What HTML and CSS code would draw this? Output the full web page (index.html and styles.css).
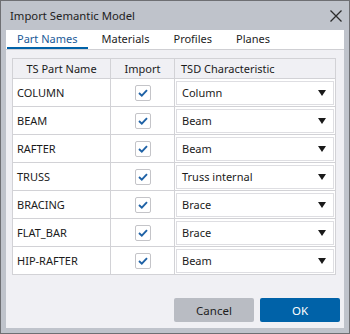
FILE: index.html
```html
<!DOCTYPE html>
<html lang="en">
<head>
  <meta charset="UTF-8" />
  <title>Import Semantic Model</title>
  <link rel="stylesheet" href="styles.css">
</head>
<body>
  <div class="window">
    <div class="titlebar">
      <span class="title">Import Semantic Model</span>
      <svg class="close" width="12" height="12" viewBox="0 0 12 12">
        <path d="M0.5 0.5 L11.5 11.5 M11.5 0.5 L0.5 11.5" stroke="#2b2b2b" stroke-width="1.3" fill="none"/>
      </svg>
    </div>

    <div class="content">
      <div class="tabs">
        <div class="tab active">Part Names</div>
        <div class="tab">Materials</div>
        <div class="tab">Profiles</div>
        <div class="tab">Planes</div>
      </div>

      <table class="grid">
        <thead>
          <tr>
            <th class="col-name">TS Part Name</th>
            <th class="col-import">Import</th>
            <th class="col-tsd">TSD Characteristic</th>
          </tr>
        </thead>
        <tbody id="rows"></tbody>
      </table>

      <div class="buttons">
        <button class="btn cancel">Cancel</button>
        <button class="btn ok">OK</button>
      </div>
    </div>
  </div>

  <script>
    const parts = [
      ["COLUMN", "Column"],
      ["BEAM", "Beam"],
      ["RAFTER", "Beam"],
      ["TRUSS", "Truss internal"],
      ["BRACING", "Brace"],
      ["FLAT_BAR", "Brace"],
      ["HIP-RAFTER", "Beam"]
    ];

    const check = '<svg width="10" height="8" viewBox="0 0 10 8"><path d="M1 4 L3.8 6.6 L9 1.2" stroke="#1f62a6" stroke-width="1.9" fill="none"/></svg>';
    const tbody = document.getElementById('rows');

    parts.forEach(([name, tsd]) => {
      const tr = document.createElement('tr');
      tr.innerHTML =
        `<td class="name">${name}</td>` +
        `<td class="import"><span class="checkbox">${check}</span></td>` +
        `<td class="tsd"><div class="combo"><span>${tsd}</span><span class="arrow"></span></div></td>`;
      tbody.appendChild(tr);
    });
  </script>
</body>
</html>
```

FILE: styles.css
```css
:root {
  --frame: #bfc3cb;
  --body: #f0f0f4;
  --line: #d2d2d6;
  --blue: #0062a8;
  --text: #1b1b1b;
}

body {
  margin: 0;
  font-family: 'Noto Sans', 'Open Sans', sans-serif;
  font-size: 11px;
  color: var(--text);
}

.window {
  width: 350px;
  height: 334px;
  box-sizing: border-box;
  background: var(--frame);
  border: 1px solid #6e6f73;
  display: flex;
  flex-direction: column;
}

.titlebar {
  height: 29px;
  display: flex;
  align-items: center;
  justify-content: space-between;
  padding: 0 7px 0 9px;
}

.title {
  font-size: 11.3px;
  color: #222;
}

.close {
  margin-top: 1px;
}

.content {
  flex: 1;
  margin: 0 5px 5px 5px;
  background: var(--body);
  display: flex;
  flex-direction: column;
}

.tabs {
  display: flex;
  gap: 4px;
  padding-left: 1px;
  background: #fff;
  border-bottom: 1px solid #cfcfd3;
  height: 19px;
}

.tab {
  padding: 0 10px;
  line-height: 17px;
  border-bottom: 2px solid transparent;
  color: #1e1e1e;
}

.tab.active {
  color: #1a5a98;
  border-bottom-color: var(--blue);
}

.grid {
  margin: 8px 0 0 6px;
  width: 324px;
  border-collapse: collapse;
  border: 1px solid #7f9dbd;
  table-layout: fixed;
}

.grid thead tr {
  height: 20px;
}

.grid tbody tr {
  height: 28px;
}

.grid th {
  font-weight: normal;
  background: var(--body);
  border: 1px solid var(--line);
  padding: 0;
  line-height: 14px;
}

.col-name { width: 97px; }
.col-import { width: 63px; }
.col-tsd {
  text-align: left;
  padding-left: 6px !important;
}

.grid td {
  padding: 0;
  background: #fff;
  border: 1px solid var(--line);
  line-height: 14px;
}

.grid td.name {
  padding-left: 4px;
}

.grid td.import {
  text-align: center;
}

.checkbox {
  display: inline-flex;
  align-items: center;
  justify-content: center;
  width: 14px;
  height: 14px;
  border: 1px solid #c4c4c8;
  border-radius: 2px;
  background: #fff;
  vertical-align: middle;
  margin-top: 1px;
}

.grid td.tsd {
  padding: 1px;
}

.combo {
  box-sizing: border-box;
  height: 24px;
  border: 1px solid #dedee2;
  display: flex;
  align-items: center;
  justify-content: space-between;
  padding: 0 7px 0 5px;
}

.arrow {
  width: 0;
  height: 0;
  border-left: 4.5px solid transparent;
  border-right: 4.5px solid transparent;
  border-top: 6px solid #1a1a1a;
}

.buttons {
  margin-top: auto;
  display: flex;
  justify-content: flex-end;
  gap: 6px;
  padding: 0 4px 6px 0;
}

.btn {
  width: 80px;
  height: 24px;
  border: none;
  border-radius: 2px;
  font-family: inherit;
  font-size: 11.5px;
}

.btn.cancel {
  background: #b9bcc3;
  color: #1e1e1e;
}

.btn.ok {
  background: var(--blue);
  color: #fff;
}
```
